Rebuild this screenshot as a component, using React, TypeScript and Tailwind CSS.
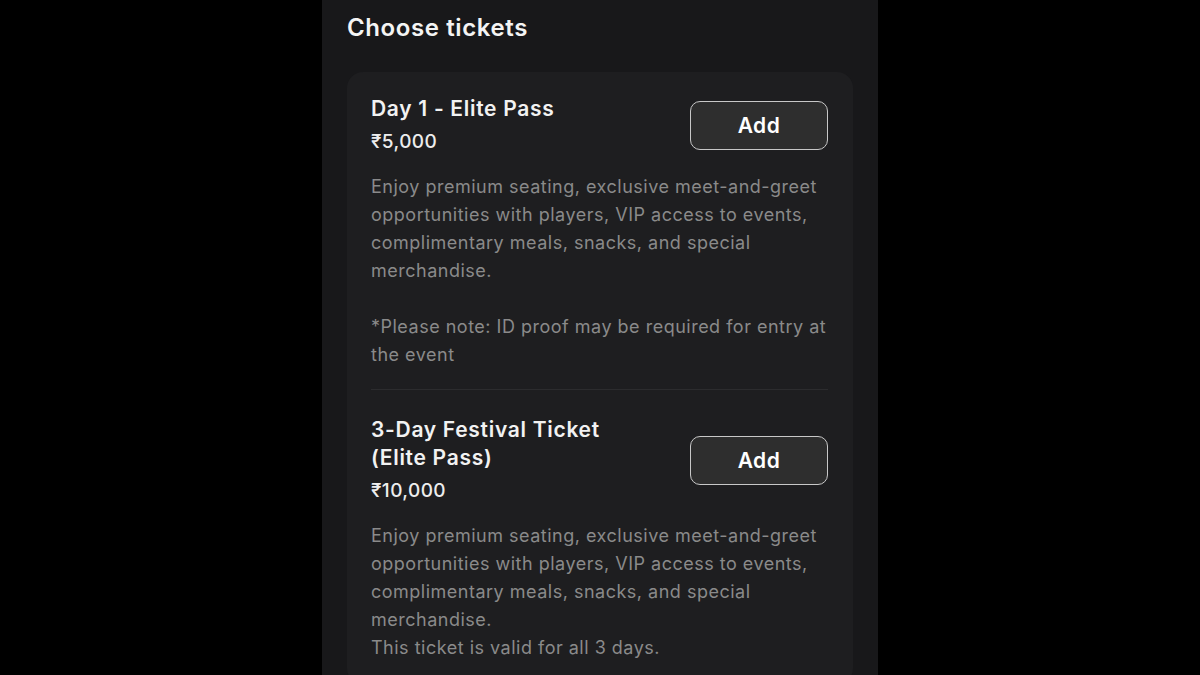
const tickets = [
  {
    name: "Day 1 - Elite Pass",
    price: "₹5,000",
    description:
      "Enjoy premium seating, exclusive meet-and-greet opportunities with players, VIP access to events, complimentary meals, snacks, and special merchandise.\n\n*Please note: ID proof may be required for entry at the event",
  },
  {
    name: "3-Day Festival Ticket (Elite Pass)",
    price: "₹10,000",
    description:
      "Enjoy premium seating, exclusive meet-and-greet opportunities with players, VIP access to events, complimentary meals, snacks, and special merchandise.\nThis ticket is valid for all 3 days.",
  },
]

const Ticket = ({ name, price, description, first }: { name: string; price: string; description: string; first?: boolean }) => (
  <div className={`${first ? "pt-[23px] pb-[20px]" : "pt-[26px] pb-[22px] border-t border-[#2c2c2e]"}`}>
    <div className="flex items-center justify-between">
      <div className="w-[250px]">
        <div className="text-[21px] font-semibold leading-7 tracking-[0.7px] text-[#f2f2f2]">{name}</div>
        <div className="mt-[5px] text-[19px] font-medium leading-7 tracking-[0.4px] text-[#ededed]">{price}</div>
      </div>
      <button className="h-[49px] w-[138px] rounded-[10px] border border-[#c8c8c8] bg-[#2e2e2e] text-[21px] font-semibold tracking-[0.5px] text-white">
        Add
      </button>
    </div>
    <p className="mt-[17px] whitespace-pre-line text-[18px] leading-7 tracking-[0.5px] text-[#8a8a8a]">{description}</p>
  </div>
)

export default function App() {
  return (
    <div className="flex h-screen w-full justify-center overflow-hidden bg-black font-['Inter',sans-serif]">
      <div className="h-full w-[556px] bg-[#18181a] px-[25px] pt-[12px]">
        <h1 className="text-[24px] font-semibold leading-8 tracking-[0.6px] text-[#f4f4f4]">Choose tickets</h1>
        <div className="mt-[28px] rounded-2xl bg-[#1e1e20] pl-6 pr-[25px]">
          {tickets.map((t, i) => (
            <Ticket key={i} {...t} first={i === 0} />
          ))}
        </div>
      </div>
    </div>
  )
}
